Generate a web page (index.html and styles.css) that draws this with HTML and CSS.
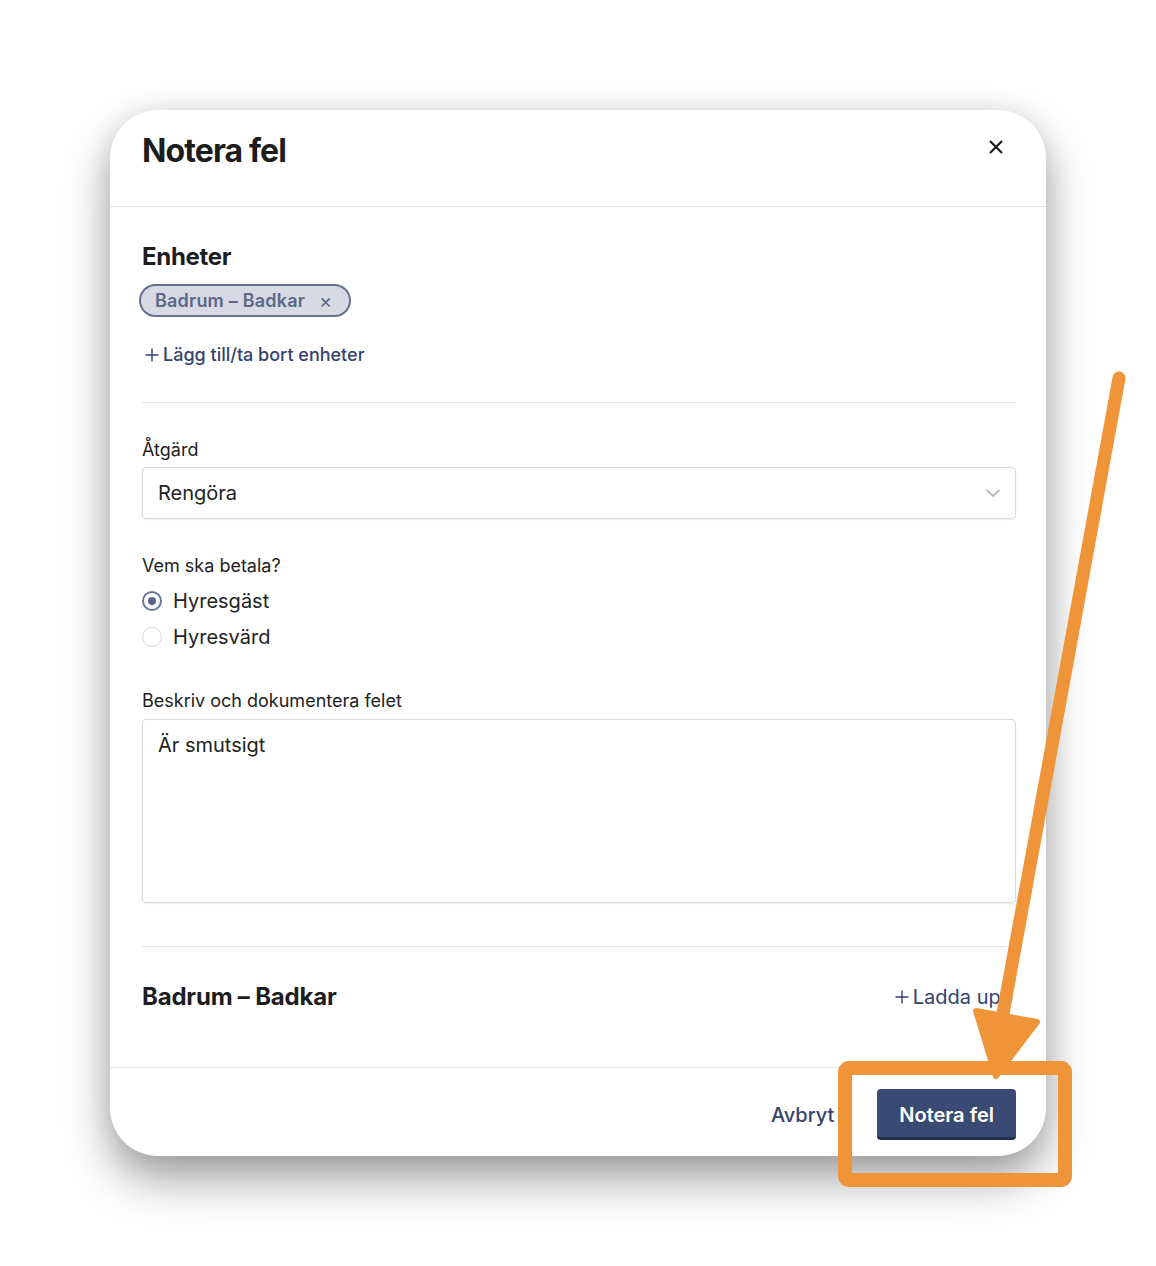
FILE: index.html
```html
<!DOCTYPE html>
<html lang="sv">

<head>
    <meta charset="UTF-8">
    <meta name="viewport" content="width=device-width, initial-scale=1.0">
    <title>Notera fel</title>
    <link rel="stylesheet" href="styles.css">
</head>

<body>
    <div class="screen">
        <div class="dialog">
            <header class="dialog-head">
                <h1>Notera fel</h1>
                <button class="close" aria-label="Stäng">
                    <svg width="16" height="16" viewBox="0 0 16 16">
                        <path d="M2 2 L14 14 M14 2 L2 14" stroke="#1f1f1f" stroke-width="2.2" fill="none" />
                    </svg>
                </button>
            </header>

            <div class="dialog-body">
                <section class="units">
                    <h2>Enheter</h2>
                    <div class="chips">
                        <span class="chip">Badrum – Badkar <span class="chip-x">×</span></span>
                    </div>
                    <a class="link-add" href="#">
                        <svg class="plus" width="14" height="14" viewBox="0 0 14 14">
                            <path d="M7 0.5 V13.5 M0.5 7 H13.5" stroke="#34426c" stroke-width="1.4" fill="none" />
                        </svg>Lägg till/ta bort enheter
                    </a>
                </section>

                <section class="fields">
                    <label class="field-label">Åtgärd</label>
                    <div class="select">
                        <span>Rengöra</span>
                        <svg width="16" height="10" viewBox="0 0 16 10">
                            <path d="M1.5 2 L8 8 L14.5 2" stroke="#b8b8b8" stroke-width="1.8" fill="none" />
                        </svg>
                    </div>

                    <label class="field-label payer-label">Vem ska betala?</label>
                    <div class="radios">
                        <div class="radio-row">
                            <span class="radio checked"></span>
                            <span>Hyresgäst</span>
                        </div>
                        <div class="radio-row">
                            <span class="radio"></span>
                            <span>Hyresvärd</span>
                        </div>
                    </div>

                    <label class="field-label desc-label">Beskriv och dokumentera felet</label>
                    <div class="textarea">Är smutsigt</div>
                </section>

                <section class="unit-row">
                    <h3>Badrum – Badkar</h3>
                    <a class="link-add upload" href="#">
                        <svg class="plus" width="14" height="14" viewBox="0 0 14 14">
                            <path d="M7 0.5 V13.5 M0.5 7 H13.5" stroke="#34426c" stroke-width="1.4" fill="none" />
                        </svg>Ladda upp
                    </a>
                </section>
            </div>

            <footer class="dialog-foot">
                <a class="cancel" href="#">Avbryt</a>
                <button class="primary">Notera fel</button>
            </footer>
        </div>

        <!-- annotation drawn on top of the screenshot -->
        <svg class="annotation" width="1156" height="1266" viewBox="0 0 1156 1266">
            <line x1="1119" y1="378" x2="1000" y2="1030" stroke="#f0943a" stroke-width="13" stroke-linecap="round" />
            <polygon points="976,1011 1037,1022 996,1076" fill="#f0943a" stroke="#f0943a" stroke-width="6" stroke-linejoin="round" />
            <rect x="845" y="1068" width="220" height="112" rx="4" fill="none" stroke="#f0943a" stroke-width="14" />
        </svg>
    </div>
</body>

</html>
```

FILE: styles.css
```css
body {
    margin: 0;
    padding: 0;
    background-color: #ffffff;
    font-family: 'Inter', 'Liberation Sans', sans-serif;
    color: #222222;
}

.screen {
    position: relative;
    width: 1156px;
    height: 1266px;
    padding: 110px 110px 0 110px;
    box-sizing: border-box;
    overflow: hidden;
}

.dialog {
    width: 936px;
    background-color: #ffffff;
    border-radius: 48px;
    overflow: hidden;
    box-shadow: 0 24px 46px rgba(0, 0, 0, 0.36), 0 0 28px rgba(0, 0, 0, 0.09);
}

/* header */

.dialog-head {
    display: flex;
    justify-content: space-between;
    align-items: flex-start;
    height: 97px;
    box-sizing: border-box;
    padding: 21px 42px 0 32px;
    border-bottom: 1px solid #e6e6e6;
}

.dialog-head h1 {
    margin: 0;
    font-size: 32px;
    line-height: 40px;
    font-weight: 700;
    letter-spacing: -0.9px;
    color: #1d1d1d;
}

.close {
    border: none;
    background: none;
    padding: 0;
    margin-top: 8px;
    width: 16px;
    height: 16px;
    cursor: pointer;
}

/* body */

.dialog-body {
    padding: 0 30px 0 32px;
}

.units {
    padding: 35px 0 35px 0;
    border-bottom: 1px solid #e6e6e6;
}

.units h2 {
    margin: 0;
    font-size: 24px;
    line-height: 30px;
    font-weight: 700;
    letter-spacing: -0.3px;
    color: #1d1d1d;
}

.chips {
    display: flex;
    margin: 12px 0 26px -3px;
}

.chip {
    display: inline-flex;
    align-items: center;
    gap: 14px;
    height: 33px;
    box-sizing: border-box;
    padding: 0 17px 0 14px;
    border: 2px solid #68728f;
    border-radius: 17px;
    background-color: #d7dae4;
    color: #5d6888;
    font-size: 18px;
    font-weight: 600;
    letter-spacing: 0.2px;
}

.chip-x {
    font-size: 20px;
    font-weight: 400;
}

.link-add {
    display: inline-flex;
    align-items: center;
    gap: 4px;
    padding-left: 3px;
    font-size: 18px;
    line-height: 24px;
    font-weight: 500;
    color: #34426c;
    text-decoration: none;
}

.fields {
    display: flex;
    flex-direction: column;
    padding: 35px 0 43px 0;
    border-bottom: 1px solid #e6e6e6;
}

.field-label {
    font-size: 18px;
    line-height: 24px;
    color: #222222;
    margin-bottom: 5px;
}

.payer-label {
    margin-top: 35px;
    margin-bottom: 9px;
}

.desc-label {
    margin-top: 38px;
    margin-bottom: 6px;
}

.select {
    display: flex;
    justify-content: space-between;
    align-items: center;
    height: 52px;
    box-sizing: border-box;
    padding: 0 14px 0 15px;
    border: 1px solid #d9d9d9;
    border-radius: 4px;
    box-shadow: 0 1px 2px rgba(0, 0, 0, 0.07);
    font-size: 20px;
}

.radios {
    display: flex;
    flex-direction: column;
    gap: 8px;
}

.radio-row {
    display: flex;
    align-items: center;
    gap: 11px;
    height: 28px;
    font-size: 20px;
}

.radio {
    width: 20px;
    height: 20px;
    box-sizing: border-box;
    border: 1.5px solid #d6d6d6;
    border-radius: 50%;
    display: flex;
    align-items: center;
    justify-content: center;
}

.radio.checked {
    border: 2px solid #6b7595;
}

.radio.checked::after {
    content: "";
    width: 8px;
    height: 8px;
    border-radius: 50%;
    background-color: #5a6587;
}

.textarea {
    height: 184px;
    box-sizing: border-box;
    padding: 11px 15px;
    border: 1px solid #d9d9d9;
    border-radius: 4px;
    box-shadow: 0 1px 2px rgba(0, 0, 0, 0.07);
    font-size: 20px;
    line-height: 28px;
}

.unit-row {
    display: flex;
    justify-content: space-between;
    align-items: center;
    padding: 35px 0 55px 0;
}

.unit-row h3 {
    margin: 0;
    font-size: 24px;
    line-height: 30px;
    font-weight: 700;
    letter-spacing: -0.2px;
    color: #1d1d1d;
}

.upload {
    font-size: 20px;
    font-weight: 400;
    margin-right: 3px;
}

/* footer */

.dialog-foot {
    display: flex;
    justify-content: flex-end;
    align-items: center;
    gap: 43px;
    padding: 21px 30px 16px 0;
    border-top: 1px solid #e6e6e6;
}

.cancel {
    font-size: 20px;
    font-weight: 500;
    color: #34426c;
    text-decoration: none;
}

.primary {
    height: 51px;
    padding: 3px 22px 0 22px;
    border: none;
    border-bottom: 3px solid #222d4d;
    border-radius: 4px;
    background-color: #3b4a72;
    color: #ffffff;
    font-family: 'Inter', 'Liberation Sans', sans-serif;
    font-size: 20px;
    font-weight: 600;
    cursor: pointer;
}

.annotation {
    position: absolute;
    left: 0;
    top: 0;
    pointer-events: none;
}
```
